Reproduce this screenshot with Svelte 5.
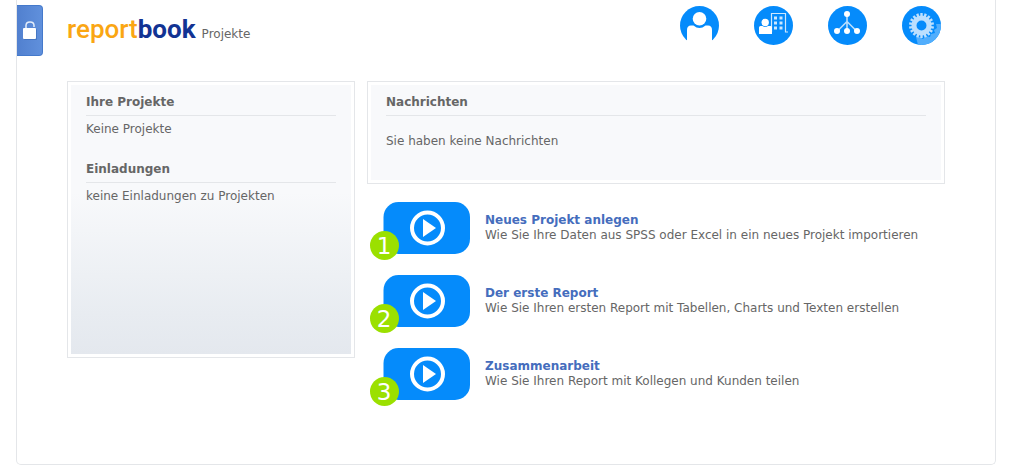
<script>
  const tutorials = [
    {
      title: "Neues Projekt anlegen",
      text: "Wie Sie Ihre Daten aus SPSS oder Excel in ein neues Projekt importieren"
    },
    {
      title: "Der erste Report",
      text: "Wie Sie Ihren ersten Report mit Tabellen, Charts und Texten erstellen"
    },
    {
      title: "Zusammenarbeit",
      text: "Wie Sie Ihren Report mit Kollegen und Kunden teilen"
    }
  ];

  // angles of the cog's teeth
  const teeth = Array.from({ length: 18 }, (_, i) => i * 20);
</script>

<div class="sheet">
  <header>
    <button class="lock" aria-label="Entsperren">
      <svg width="16" height="22" viewBox="0 0 16 22">
        <path d="M4 8V5.500Q4 2 8 2T12 5.500V7" fill="none" stroke="#e4edfa" stroke-width="1.500" />
        <rect x="2" y="9" width="13" height="11" rx="1" fill="#2f62ad" opacity="0.500" />
        <rect x="1" y="8" width="13" height="11" rx="1" fill="#fff" />
      </svg>
    </button>

    <div class="brand">
      <a class="logo" href="#projekte">report<b>book</b></a>
      <span>Projekte</span>
    </div>

    <nav>
      <a href="#profil" aria-label="Profil">
        <svg width="39" height="39" viewBox="0 0 39 39">
          <circle cx="19.500" cy="19.500" r="19.500" fill="#058bfb" />
          <circle cx="19.500" cy="12.800" r="6.800" fill="#fff" />
          <path d="M7 39V24Q7 19.500 11 19.500H13.500Q19.500 24.500 25.500 19.500H28Q32 19.500 32 24V39Z" fill="#fff" />
        </svg>
      </a>
      <a href="#firma" aria-label="Firma">
        <svg width="39" height="39" viewBox="0 0 39 39">
          <circle cx="19.500" cy="19.500" r="19.500" fill="#058bfb" />
          <path d="M17.500 26V7.500H31.500V26H34" fill="none" stroke="#cde7fe" stroke-width="1.200" />
          <path d="M20 10.500h3v3h-3zM25.500 10.500h3v3h-3zM20 15.500h3v3h-3zM25.500 15.500h3v3h-3zM20 20.500h3v3h-3zM25.500 20.500h3v3h-3z" fill="#cde7fe" />
          <circle cx="11.200" cy="16.500" r="3.700" fill="#fff" />
          <path d="M5 28V21.500Q5 20 6.500 20H8.500Q11.200 22 14 20H16.500Q18 20 18 21.500V28Z" fill="#fff" />
        </svg>
      </a>
      <a href="#team" aria-label="Team">
        <svg width="39" height="39" viewBox="0 0 39 39">
          <circle cx="19.500" cy="19.500" r="19.500" fill="#058bfb" />
          <path d="M19 8V25M19 15.500L9.500 25M19 15.500L28.500 25" fill="none" stroke="#b9defe" stroke-width="1.600" />
          <circle cx="19" cy="8" r="3" fill="#fff" />
          <circle cx="9" cy="25" r="3" fill="#fff" />
          <circle cx="19" cy="25" r="3" fill="#fff" />
          <circle cx="29" cy="25" r="3" fill="#fff" />
        </svg>
      </a>
      <a href="#einstellungen" aria-label="Einstellungen">
        <svg width="39" height="39" viewBox="0 0 39 39">
          <clipPath id="disc"><circle cx="19.500" cy="19.500" r="19.500" /></clipPath>
          <circle cx="19.500" cy="19.500" r="19.500" fill="#058bfb" />
          <path d="M14 31L16 39H39V18H34L35 22L32 24L33 27L29 28L28 31L24 30L21 33L18 31Z" fill="#52aefc" clip-path="url(#disc)" />
          <circle cx="19.500" cy="19.500" r="7.500" fill="none" stroke="#bcdffe" stroke-width="5" />
          {#each teeth as angle}
            <rect x="18.300" y="7" width="2.400" height="3.500" fill="#bcdffe" transform="rotate({angle} 19.500 19.500)" />
          {/each}
        </svg>
      </a>
    </nav>
  </header>

  <main>
    <aside class="panel">
      <div class="inner shaded">
        <section>
          <h2>Ihre Projekte</h2>
          <p>Keine Projekte</p>
        </section>
        <section>
          <h2>Einladungen</h2>
          <p>keine Einladungen zu Projekten</p>
        </section>
      </div>
    </aside>

    <div class="content">
      <div class="panel">
        <div class="inner news">
          <h2>Nachrichten</h2>
          <p>Sie haben keine Nachrichten</p>
        </div>
      </div>

      <ul>
        {#each tutorials as { title, text }, i}
          <li>
            <svg class="thumb" width="100" height="58" viewBox="0 0 100 58">
              <rect x="13.500" width="86.500" height="52" rx="15" fill="#058bfb" />
              <circle cx="57.500" cy="26" r="15.500" fill="none" stroke="#fff" stroke-width="4" />
              <path d="M53 17V35L66 26Z" fill="#fff" />
              <circle cx="14.500" cy="43.500" r="14.500" fill="#9be000" />
              <text x="14" y="52" text-anchor="middle">{i + 1}</text>
            </svg>
            <div>
              <a href="#tutorial-{i + 1}">{title}</a>
              <p>{text}</p>
            </div>
          </li>
        {/each}
      </ul>
    </div>
  </main>
</div>

<style>
  :global(body) {
    margin: 0;
    background: #fff;
  }

  .sheet {
    margin: 0 20px 3px 16px;
    border: 1px solid #e4e6e9;
    border-top: 0;
    border-radius: 0 0 5px 5px;
    font: 12px/15px Verdana, "DejaVu Sans", sans-serif;
    color: #666;
  }

  h2,
  p,
  ul {
    margin: 0;
    padding: 0;
  }

  header {
    display: flex;
    align-items: flex-start;
    height: 81px;
    padding-right: 54px;
  }

  .lock {
    display: flex;
    align-items: center;
    justify-content: center;
    width: 26px;
    height: 51px;
    margin: 5px 24px 0 0;
    padding: 0;
    border: 1px solid #4479cb;
    border-left: 0;
    border-radius: 0 4px 4px 0;
    background: linear-gradient(to right, #5180cf, #6090dc);
  }

  .brand {
    display: flex;
    align-items: baseline;
    gap: 6px;
    margin-top: 13px;
  }

  .logo {
    font: 500 26px/32px Roboto, sans-serif;
    color: #faa613;
    text-decoration: none;
  }

  .logo b {
    font-weight: 700;
    color: #123393;
  }

  nav {
    display: flex;
    gap: 35px;
    margin: 6px 0 0 auto;
  }

  nav svg,
  .thumb {
    display: block;
  }

  main {
    display: flex;
    align-items: flex-start;
    gap: 12px;
    padding: 0 50px 58px;
  }

  aside {
    flex: 0 0 288px;
  }

  .content {
    flex: 1;
  }

  .panel {
    box-sizing: border-box;
    padding: 3px;
    border: 1px solid #e4e6e9;
  }

  .inner {
    padding: 10px 15px 0;
    background: #f8f9fb;
  }

  .shaded {
    min-height: 259px;
    background: linear-gradient(#f8f9fb 40%, #e8ecf1 85%, #e4e8ee);
  }

  h2 {
    padding-bottom: 5px;
    border-bottom: 1px solid #e4e6e9;
    font-size: 12px;
    line-height: 15px;
  }

  section p {
    padding: 6px 0 25px;
  }

  .news p {
    padding: 18px 0 31px;
  }

  ul {
    display: flex;
    flex-direction: column;
    gap: 15px;
    padding: 18px 0 0 3px;
    list-style: none;
  }

  li {
    display: flex;
    gap: 15px;
  }

  li div {
    padding-top: 11px;
  }

  li a {
    font-weight: bold;
    color: #456dbd;
    text-decoration: none;
  }

  .thumb text {
    font-size: 23px;
    fill: #fff;
  }
</style>
